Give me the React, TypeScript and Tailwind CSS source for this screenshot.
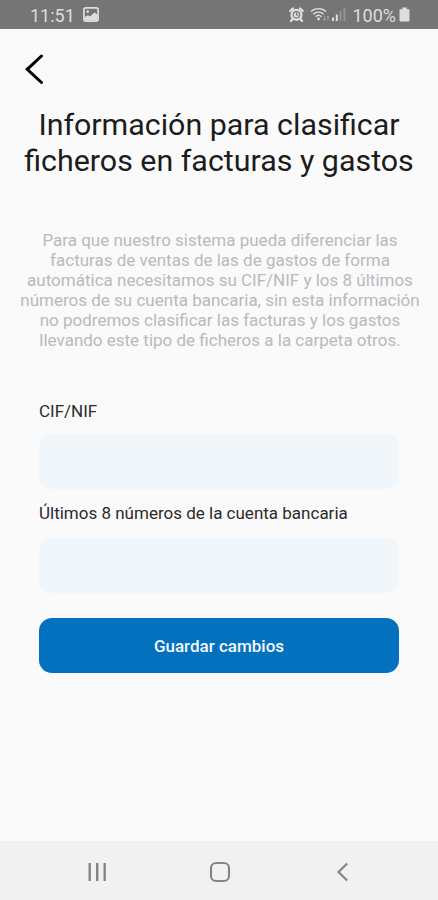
import React, { useState } from 'react';

interface FieldProps {
  id: string;
  label: string;
  value: string;
  inputClassName: string;
  onChange: (value: string) => void;
}

const titleLines = ['Información para clasificar', 'ficheros en facturas y gastos'];

const descriptionLines = [
  'Para que nuestro sistema pueda diferenciar las',
  'facturas de ventas de las de gastos de forma',
  'automática necesitamos su CIF/NIF y los 8 últimos',
  'números de su cuenta bancaria, sin esta información',
  'no podremos clasificar las facturas y los gastos',
  'llevando este tipo de ficheros a la carpeta otros.',
];

const StatusBar = () => (
  <div className="flex h-[29px] shrink-0 items-center justify-between bg-[#757575] pl-[30px] pr-7 text-[#dedede]">
    <div className="flex items-center gap-2">
      <span className="pt-0.5 text-[18px] leading-[29px]">11:51</span>
      <svg width="16" height="15" viewBox="0 0 16 15" fill="none">
        <rect x="0.9" y="0.9" width="14.2" height="13.2" rx="2" stroke="currentColor" strokeWidth="1.7" />
        <circle cx="4.7" cy="4.6" r="1.3" fill="currentColor" />
        <path d="M1.5 10L5 8.2L7 9.4L11.4 5.6L14.5 7.6V13.5H1.5Z" fill="currentColor" />
      </svg>
    </div>
    <div className="flex items-center">
      <svg width="15" height="15" viewBox="0 0 15 15" fill="none">
        <circle cx="7.5" cy="7.8" r="6.1" fill="currentColor" />
        <path d="M1.2 4L4 1.4M13.8 4L11 1.4M3.5 12L2 14M11.5 12L13 14" stroke="currentColor" strokeWidth="2.2" strokeLinecap="round" />
        <circle cx="7.5" cy="7.8" r="3.2" stroke="#757575" strokeWidth="1.1" />
        <path d="M7.5 5.6V8H9.6" stroke="#757575" strokeWidth="1.1" />
      </svg>
      <svg className="ml-1.5" width="20" height="15" viewBox="0 0 20 15" fill="none">
        <g stroke="currentColor" strokeWidth="1.4">
          <path d="M1 4.6C5 .6 12 .6 16 4.6" />
          <path d="M3.3 7.2C6.2 4.4 10.8 4.4 13.7 7.2" />
          <path d="M5.6 9.7C7.3 8 9.7 8 11.4 9.7" />
        </g>
        <circle cx="8.5" cy="12" r="1.4" fill="currentColor" />
        <path d="M14.5 9V13.5M13 12L14.5 13.7L16 12M18 13.5V9M16.7 10.5L18 9L19.3 10.5" stroke="#a3a3a3" strokeWidth="0.9" />
      </svg>
      <svg className="ml-0.5" width="14" height="15" viewBox="0 0 14 15" fill="currentColor">
        <rect x="0" y="10.5" width="2" height="3.5" />
        <rect x="3.8" y="7.5" width="2" height="6.5" />
        <rect x="7.6" y="4" width="2" height="10" opacity="0.3" />
        <rect x="11.4" y="1" width="2" height="13" opacity="0.3" />
      </svg>
      <span className="ml-[6px] pt-0.5 text-[18px] leading-[29px]">100%</span>
      <svg className="ml-[3px]" width="11" height="15" viewBox="0 0 11 15" fill="currentColor">
        <path d="M3.3 0.5H7.7V2.2H9.5Q10.5 2.2 10.5 3.2V13.5Q10.5 14.5 9.5 14.5H1.5Q.5 14.5 .5 13.5V3.2Q.5 2.2 1.5 2.2H3.3Z" />
      </svg>
    </div>
  </div>
);

const Field: React.FC<FieldProps> = ({ id, label, value, inputClassName, onChange }) => (
  <div>
    <label htmlFor={id} className="block text-[17px] leading-5 text-[#2b2b2b]">
      {label}
    </label>
    <input
      id={id}
      type="text"
      value={value}
      onChange={(e) => onChange(e.target.value)}
      className={`block h-[55px] w-full rounded-xl bg-[#f1f6fa] px-4 text-[17px] text-[#2b2b2b] outline-none ${inputClassName}`}
    />
  </div>
);

const NavigationBar = () => (
  <div className="flex h-[59px] shrink-0 items-center bg-[#f1f1f1] pl-[87px] pt-[3px] text-[#858585]">
    <button type="button" aria-label="Recientes">
      <svg width="20" height="20" viewBox="0 0 20 20" fill="none" stroke="currentColor" strokeWidth="2.4">
        <path d="M2.7 1V19M10.2 1V19M17.7 1V19" />
      </svg>
    </button>
    <button type="button" aria-label="Inicio" className="ml-[102px]">
      <svg width="22" height="22" viewBox="0 0 22 22" fill="none" stroke="currentColor" strokeWidth="2.2">
        <rect x="2" y="2" width="18" height="18" rx="5" />
      </svg>
    </button>
    <button type="button" aria-label="Atrás" className="ml-[105px]">
      <svg width="14" height="20" viewBox="0 0 14 20" fill="none" stroke="currentColor" strokeWidth="2.2">
        <path d="M11.2 1.5L2.5 10L11.2 18.5" />
      </svg>
    </button>
  </div>
);

const App = () => {
  const [taxId, setTaxId] = useState('');
  const [account, setAccount] = useState('');

  return (
    <div className="flex h-[900px] w-[438px] flex-col overflow-hidden bg-[#fafafa] font-['Roboto',sans-serif]">
      <StatusBar />

      <main className="flex-1">
        <button type="button" aria-label="Volver" className="ml-[25px] mt-[25px] block">
          <svg width="19" height="31" viewBox="0 0 19 31" fill="none" stroke="#000" strokeWidth="3" strokeLinecap="round">
            <path d="M16.5 2L2.2 15.3L16.5 28.5" />
          </svg>
        </button>

        <h1 className="mt-[22px] text-center text-[30.4px] leading-9 text-[#1c1c1c]">
          {titleLines.map((line) => (
            <span key={line} className="block whitespace-nowrap">{line}</span>
          ))}
        </h1>

        <p className="mt-[52px] pl-[2px] text-center text-[17px] leading-[19.9px] text-[#b9b9bd]">
          {descriptionLines.map((line) => (
            <span key={line} className="block whitespace-nowrap">{line}</span>
          ))}
        </p>

        <form className="mx-[39px] mt-[50.4px]" onSubmit={(e) => e.preventDefault()}>
          <div className="space-y-3.5">
            <Field id="tax-id" label="CIF/NIF" value={taxId} inputClassName="mt-[13px]" onChange={setTaxId} />
            <Field
              id="account"
              label="Últimos 8 números de la cuenta bancaria"
              value={account}
              inputClassName="mt-[15px]"
              onChange={setAccount}
            />
          </div>
          <button
            type="submit"
            className="mt-[25px] block h-[55px] w-full rounded-[13px] bg-[#0471be] pt-0.5 text-[17px] font-medium text-[#f3f8fc]"
          >
            Guardar cambios
          </button>
        </form>
      </main>

      <NavigationBar />
    </div>
  );
};

export default App;
